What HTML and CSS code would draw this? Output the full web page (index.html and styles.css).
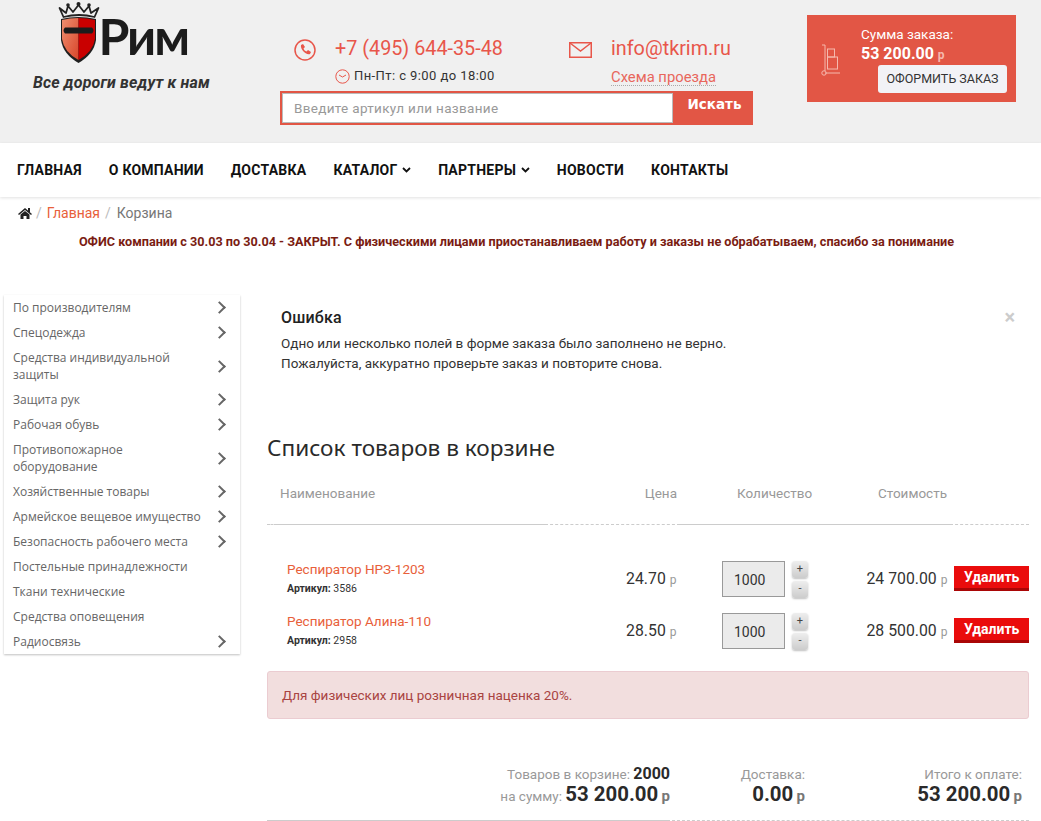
FILE: index.html
```html
<!DOCTYPE html>
<html lang="ru">
<head>
<meta charset="utf-8">
<title>Корзина</title>
<link rel="stylesheet" href="styles.css">
</head>
<body>
<header class="top">
  <div class="brand">
    <div class="logo">
      <svg class="crest" width="42" height="63" viewBox="0 0 42 63">
        <defs><linearGradient id="lg" x1="0" y1="0" x2="1" y2="1"><stop offset="0" stop-color="#f09070"/><stop offset="1" stop-color="#d8452a"/></linearGradient></defs>
        <path d="M1.500 7L5.500 16Q21 12 36.500 16L40.500 7L33 12L31 5L26 11L20.500 4L15 11L10 5L8 12Z" fill="none" stroke="#222" stroke-width="1.800" stroke-linejoin="round"/>
        <circle cx="10" cy="4" r="1.800" fill="#222"/><circle cx="20.500" cy="3" r="2" fill="#222"/><circle cx="31" cy="4" r="1.800" fill="#222"/>
        <path d="M3 18Q20 14 38 18V39Q36 53 20.500 62Q5 53 3 39Z" fill="#1f1f1f"/>
        <path d="M4 19Q12 17 20.500 17V59Q6 51 4 38Z" fill="url(#lg)"/>
        <path d="M20.500 17Q29 17 37 19V38Q35 51 20.500 59Z" fill="#c90000"/>
        <path d="M7 26.500H34Q37 29.500 34 32.500H7Q4 29.500 7 26.500Z" fill="#1c1c1c"/>
      </svg>
      <span class="logo-word">Рим</span>
    </div>
    <div class="slogan">Все дороги ведут к нам</div>
  </div>
  <div class="contacts">
    <div class="contact-row">
      <div class="contact phone">
        <svg class="c-icon" width="22" height="22" viewBox="0 0 22 22"><circle cx="11" cy="11" r="10" fill="none" stroke="#e8564a" stroke-width="1.500"/><path d="M7 6l2-1 2 3-1.500 1.500c.5 1.500 1.500 2.500 3 3L14 11l3 2-1 2c-4 1.500-10-5-9-9z" fill="#e8564a"/></svg>
        <div class="contact-text">
          <a class="big-link">+7 (495) 644-35-48</a>
          <div class="hours"><svg width="15" height="15" viewBox="0 0 15 15"><circle cx="7.500" cy="7.500" r="6.700" fill="none" stroke="#e8564a"/><path d="M4 6l3.500 2L11 6" fill="none" stroke="#e8564a"/></svg>Пн-Пт: с 9:00 до 18:00</div>
        </div>
      </div>
      <div class="contact mail">
        <svg class="c-icon" width="23" height="16" viewBox="0 0 23 16"><rect x=".75" y=".75" width="21.500" height="14.500" fill="none" stroke="#e8564a" stroke-width="1.500"/><path d="M1 1l10.500 8L22 1" fill="none" stroke="#e8564a" stroke-width="1.500"/></svg>
        <div class="contact-text">
          <a class="big-link">info@tkrim.ru</a>
          <a class="map-link">Схема проезда</a>
        </div>
      </div>
    </div>
    <form class="search">
      <input class="search-input" placeholder="Введите артикул или название">
      <span class="search-btn">Искать</span>
    </form>
  </div>
  <div class="order">
    <svg class="cart" width="20" height="32" viewBox="0 0 20 32"><g fill="none" stroke="#f5b9ae"><path d="M1 1h3v26M4 29h15"/><rect x="6.500" y="5" width="7" height="8"/><rect x="6.500" y="13" width="10" height="12"/><circle cx="3" cy="29" r="2.200"/></g></svg>
    <div class="order-info">
      <div class="order-label">Сумма заказа:</div>
      <div class="order-sum">53 200.00 <span class="order-cur">р</span></div>
      <a class="order-btn">ОФОРМИТЬ ЗАКАЗ</a>
    </div>
  </div>
</header>
<nav class="menu">
  <a>ГЛАВНАЯ</a>
  <a>О КОМПАНИИ</a>
  <a>ДОСТАВКА</a>
  <a>КАТАЛОГ <svg class="caret" width="9" height="6" viewBox="0 0 9 6"><path d="M1 1l3.500 3.500L8 1" fill="none" stroke="#111" stroke-width="1.800"/></svg></a>
  <a>ПАРТНЕРЫ <svg class="caret" width="9" height="6" viewBox="0 0 9 6"><path d="M1 1l3.500 3.500L8 1" fill="none" stroke="#111" stroke-width="1.800"/></svg></a>
  <a>НОВОСТИ</a>
  <a>КОНТАКТЫ</a>
</nav>
<div class="crumbs">
  <svg width="14" height="11" viewBox="0 0 14 11"><path d="M7 0l7 6-1 1-6-5-6 5-1-1zM2.500 6.500L7 3l4.500 3.500V11H8.500V8h-3v3h-3z" fill="#222"/><rect x="10" y="0" width="2" height="4" fill="#222"/></svg>
  <span class="sep">/</span><a class="crumb-link">Главная</a><span class="sep">/</span><span class="crumb-cur">Корзина</span>
</div>
<p class="notice">ОФИС компании с 30.03 по 30.04 - ЗАКРЫТ. С физическими лицами приостанавливаем работу и заказы не обрабатываем, спасибо за понимание</p>
<div class="layout">
  <aside class="side">
    <a class="side-item">По производителям<i class="chev"></i></a>
    <a class="side-item">Спецодежда<i class="chev"></i></a>
    <a class="side-item">Средства индивидуальной защиты<i class="chev"></i></a>
    <a class="side-item">Защита рук<i class="chev"></i></a>
    <a class="side-item">Рабочая обувь<i class="chev"></i></a>
    <a class="side-item">Противопожарное оборудование<i class="chev"></i></a>
    <a class="side-item">Хозяйственные товары<i class="chev"></i></a>
    <a class="side-item">Армейское вещевое имущество<i class="chev"></i></a>
    <a class="side-item">Безопасность рабочего места<i class="chev"></i></a>
    <a class="side-item">Постельные принадлежности</a>
    <a class="side-item">Ткани технические</a>
    <a class="side-item">Средства оповещения</a>
    <a class="side-item">Радиосвязь<i class="chev"></i></a>
  </aside>
  <main class="main">
    <section class="error">
      <span class="close">×</span>
      <h3 class="error-title">Ошибка</h3>
      <p class="error-text">Одно или несколько полей в форме заказа было заполнено не верно.<br>Пожалуйста, аккуратно проверьте заказ и повторите снова.</p>
    </section>
    <h1 class="cart-title">Список товаров в корзине</h1>
    <div class="thead">
      <span class="col-name">Наименование</span>
      <span class="col-price">Цена</span>
      <span class="col-qty">Количество</span>
      <span class="col-sum">Стоимость</span>
    </div>
    <div class="rule"><i class="dash d1"></i><i class="solid s1"></i><i class="dash d2"></i><i class="solid s2"></i><i class="dash d3"></i></div>
    <div class="rows">
      <div class="row">
        <div class="col-name"><a class="prod">Респиратор НРЗ-1203</a><div class="sku"><b>Артикул:</b> 3586</div></div>
        <div class="col-price money">24.70 <span class="cur">р</span></div>
        <div class="col-qty qty"><span class="qty-box">1000</span><span class="steps"><span class="step">+</span><span class="step">-</span></span></div>
        <div class="col-sum money">24 700.00 <span class="cur">р</span></div>
        <a class="del">Удалить</a>
      </div>
      <div class="row">
        <div class="col-name"><a class="prod">Респиратор Алина-110</a><div class="sku"><b>Артикул:</b> 2958</div></div>
        <div class="col-price money">28.50 <span class="cur">р</span></div>
        <div class="col-qty qty"><span class="qty-box">1000</span><span class="steps"><span class="step">+</span><span class="step">-</span></span></div>
        <div class="col-sum money">28 500.00 <span class="cur">р</span></div>
        <a class="del">Удалить</a>
      </div>
    </div>
    <div class="alert">Для физических лиц розничная наценка 20%.</div>
    <div class="totals">
      <div class="t-goods">
        <div>Товаров в корзине: <b class="t-mid">2000</b></div>
        <div>на сумму: <b class="t-big">53 200.00</b> <b class="t-cur">р</b></div>
      </div>
      <div class="t-ship">
        <div>Доставка:</div>
        <div><b class="t-big">0.00</b> <b class="t-cur">р</b></div>
      </div>
      <div class="t-all">
        <div>Итого к оплате:</div>
        <div><b class="t-big">53 200.00</b> <b class="t-cur">р</b></div>
      </div>
    </div>
    <div class="rule"><i class="solid s3"></i><i class="dash d4"></i></div>
  </main>
</div>
</body>
</html>
```
FILE: styles.css
```css
* { box-sizing: border-box; }
html, body { height: 821px; overflow: hidden; }
body { margin: 0; background: #fff; color: #333; font-family: Roboto, "Liberation Sans", sans-serif; font-size: 14px; }
a { color: inherit; text-decoration: none; }

.top { height: 143px; background: #f0f0f0; position: relative; display: flex; }
.brand { width: 280px; padding-left: 33px; padding-top: 1px; }
.logo { display: flex; margin-left: 25px; height: 63px; }
.crest { display: block; flex: none; }
.logo-word { font-family: Lato, "Open Sans", sans-serif; font-weight: 700; font-size: 50px; line-height: 70px; letter-spacing: -2px; color: #1c1c1c; margin-left: -1.500px; }
.slogan { margin-top: 9px; font-weight: 700; font-style: italic; font-size: 16px; letter-spacing: .14px; line-height: 20px; color: #333; }
.contacts { width: 473px; padding-top: 38px; }
.contact-row { display: flex; height: 53px; padding-left: 14px; }
.contact { display: flex; }
.phone { width: 275px; }
.c-icon { margin-top: 1px; flex: none; }
.phone .contact-text { margin-left: 19px; }
.mail .c-icon { margin-top: 4px; }
.mail .contact-text { margin-left: 19px; }
.big-link { display: block; font-size: 19.800px; line-height: 22px; color: #e8564a; }
.hours { display: flex; align-items: center; gap: 4px; margin-top: 7px; font-size: 13px; line-height: 18px; letter-spacing: .42px; color: #333; }
.map-link { display: inline-block; margin-top: 9px; font-size: 14.800px; line-height: 16px; color: #e8675c; border-bottom: 1px dotted #aaa; }
.search { display: flex; height: 34px; background: #e25645; padding: 2px 0 2px 2px; }
.search-input { width: 391px; height: 30px; border: 1px solid #bbb; background: #fff; padding: 0 11px; font: 13.500px Roboto, sans-serif; letter-spacing: .32px; outline: 0; }
.search-input::placeholder { color: #999; opacity: 1; }
.search-btn { flex: 1; text-align: center; padding-left: 3px; color: #fff; font: 700 13.500px/23px "DejaVu Sans", sans-serif; }
.order { position: absolute; left: 807px; top: 15px; width: 209px; height: 87px; background: #e25645; color: #fff; display: flex; }
.cart { margin: 29px 0 0 14px; flex: none; }
.order-info { margin-left: 20px; padding-top: 10px; }
.order-label { font-size: 13.500px; line-height: 18px; }
.order-sum { font-size: 16px; font-weight: 700; line-height: 20px; margin-top: 1px; }
.order-cur { font-size: 12px; color: #f5b9ae; }
.order-btn { display: block; position: absolute; left: 71px; top: 50px; width: 129px; height: 28px; background: #f2f2f6; border-radius: 3px; color: #333; font-size: 12.500px; line-height: 28px; text-align: center; }

.menu { height: 54px; display: flex; align-items: center; gap: 27px; padding-left: 17px; font-weight: 700; font-size: 14px; letter-spacing: .24px; color: #111; box-shadow: 0 1px 3px rgba(0,0,0,.12); position: relative; }
.caret { margin-left: 1px; vertical-align: 2px; }

.crumbs { display: flex; align-items: center; height: 20px; margin-top: 6px; padding-left: 18px; font-size: 14px; }
.sep { color: #bbb; margin: 0 5px 0 4px; }
.crumb-link { color: #e8603a; margin-right: 1px; }
.crumb-cur { color: #777; margin-left: 1px; }
.notice { margin: 11px 0 0; text-align: center; font-size: 12.650px; font-weight: 700; line-height: 16px; color: #7a1c12; height: 16px; padding-right: 8px; white-space: nowrap; }

.layout { display: flex; margin-top: 45px; align-items: flex-start; }
.side { width: 236px; margin-left: 4px; box-shadow: 0 1px 2px rgba(0,0,0,.25); font-family: "Open Sans", sans-serif; font-size: 12px; font-weight: 400; color: #666; }
.side-item { display: flex; align-items: center; justify-content: space-between; min-height: 25px; padding: 4px 14px 4px 9px; line-height: 17px; }
.chev { flex: none; width: 9px; height: 9px; margin: 0 2px 0 14px; border-top: 2px solid #666; border-right: 2px solid #666; transform: rotate(45deg); }

.main { width: 762px; margin-left: 27px; }
.error { position: relative; padding: 13px 0 0 14px; height: 137px; }
.close { position: absolute; right: 14px; top: 12px; font-size: 20px; line-height: 20px; color: #ccc; font-weight: 700; }
.error-title { margin: 0; font-size: 16px; font-weight: 500; letter-spacing: .2px; line-height: 20px; color: #222; }
.error-text { margin: 6px 0 0; font-size: 13.500px; line-height: 19.500px; color: #333; }
.cart-title { margin: 0; font-family: "Noto Sans", sans-serif; font-size: 22.600px; font-weight: 400; line-height: 32px; color: #2a2a2a; }
.thead { display: flex; height: 60px; padding-top: 20px; line-height: 18px; font-size: 13.500px; color: #999; }
.rule { display: flex; height: 1px; }
.rule i { display: block; border-top: 1px solid #ccc; }
.rule .dash { border-top-style: dashed; }
.d1 { width: 10px; }
.s1 { width: 268px; }
.d2 { width: 135px; }
.s2 { width: 270px; }
.d3 { width: 79px; }
.s3 { width: 400px; }
.d4 { width: 362px; }
.col-name { width: 300px; padding-left: 13px; }
.col-price { width: 110px; text-align: right; }
.col-qty { flex: none; }
.thead .col-qty { padding-left: 60px; width: 195px; }
.thead .col-sum { width: 75px; text-align: right; }
.rows { padding-top: 28px; }
.row { display: flex; height: 52px; align-items: flex-start; }
.row .col-name { padding-left: 20px; padding-top: 7px; width: 300px; }
.prod { display: block; font-size: 13.500px; line-height: 18px; color: #e8603a; }
.sku { font-size: 10.500px; line-height: 14px; margin-top: 4px; color: #333; }
.money { font-size: 15.800px; line-height: 20px; padding-top: 16px; color: #333; }
.cur { font-size: 12px; color: #999; }
.row .col-price { width: 111.500px; }
.row .col-qty { width: 158.500px; padding-left: 45.500px; display: flex; gap: 7px; padding-top: 8px; }
.qty-box { width: 63px; height: 36px; border: 1px solid #999; background: #ebebeb; padding-left: 11px; line-height: 36px; font-size: 14px; }
.steps { display: flex; flex-direction: column; gap: 3px; }
.step { width: 16px; height: 17px; border-radius: 3px; background: linear-gradient(#eee,#ccc); box-shadow: 0 1px 2px rgba(0,0,0,.25); text-align: center; font-size: 11px; line-height: 15px; color: #444; }
.row .col-sum { width: 113px; text-align: right; margin-right: 7px; white-space: nowrap; }
.del { width: 75px; height: 25px; background: #ea0c0c; border-bottom: 3px solid #aa0606; color: #fff; font-weight: 700; font-size: 14px; line-height: 22px; text-align: center; margin-top: 13px; }
.alert { margin-top: 14px; height: 48px; padding: 14px; background: #f2dede; border: 1px solid #ebccd1; border-radius: 3px; font-size: 13.500px; line-height: 18px; color: #a94442; }
.totals { margin-top: 45px; height: 56px; display: flex; font-size: 13.500px; line-height: 20px; color: #999; text-align: right; }
.totals b { color: #2a2a2a; }
.t-goods { width: 403px; }
.t-ship { width: 135px; }
.t-all { width: 217px; }
.t-mid { font-size: 16px; }
.t-big { font-size: 20.400px; }
.totals .t-cur { font-size: 15px; color: #777; }
```
